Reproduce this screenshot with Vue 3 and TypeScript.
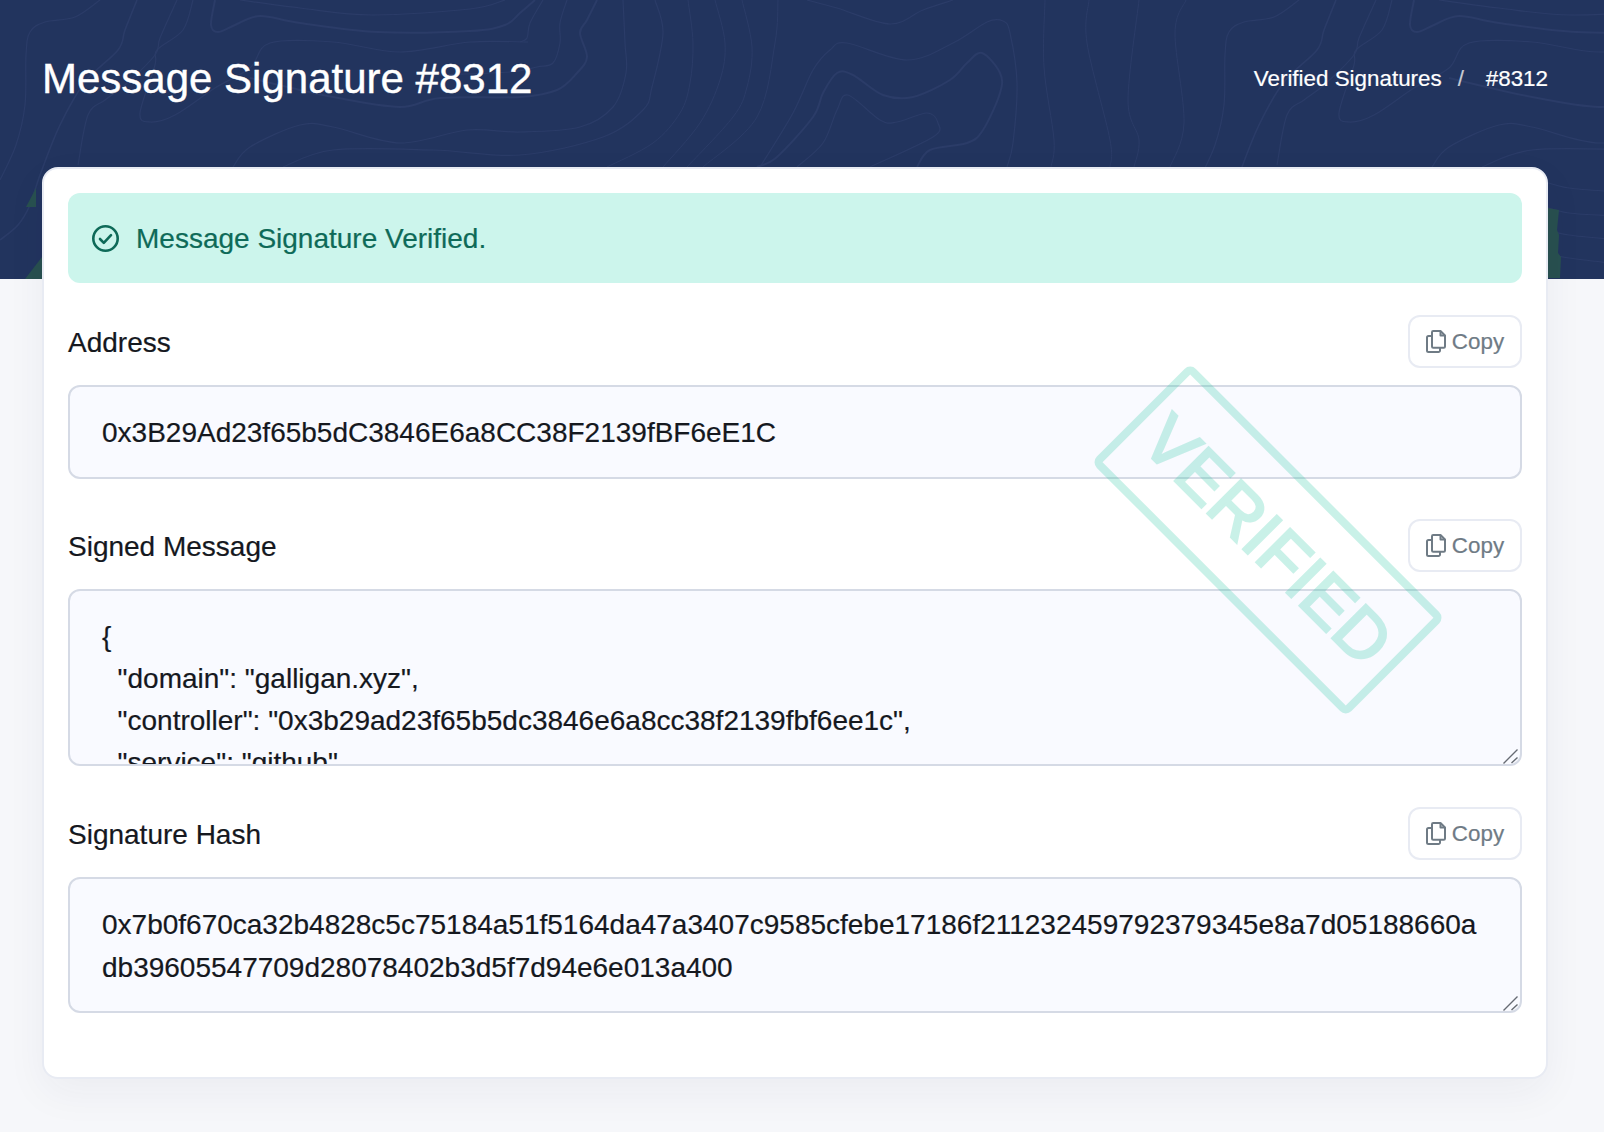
<script setup lang="ts">
type Pt = [number, number]
interface Contour { pts: Pt[]; w: number }

// Catmull-Rom through the traced points, so the contours stay smooth.
function smooth(pts: Pt[]): string {
  let d = `M${pts[0][0]} ${pts[0][1]}`
  for (let i = 0; i < pts.length - 1; i++) {
    const p0 = pts[Math.max(i - 1, 0)]
    const p1 = pts[i]
    const p2 = pts[i + 1]
    const p3 = pts[Math.min(i + 2, pts.length - 1)]
    const c1x = p1[0] + (p2[0] - p0[0]) / 6
    const c1y = p1[1] + (p2[1] - p0[1]) / 6
    const c2x = p2[0] - (p3[0] - p1[0]) / 6
    const c2y = p2[1] - (p3[1] - p1[1]) / 6
    d += ` C${c1x.toFixed(1)} ${c1y.toFixed(1)} ${c2x.toFixed(1)} ${c2y.toFixed(1)} ${p2[0]} ${p2[1]}`
  }
  return d
}

const contours: Contour[] = [
  { w: 1.2, pts: [[100, 0], [75, 17], [45, 22], [30, 32], [26, 55], [25, 105], [16, 145], [0, 180]] },
  { w: 1.6, pts: [[137, 0], [125, 30], [118, 50], [85, 82], [60, 125], [40, 175], [30, 205], [18, 225], [0, 240]] },
  { w: 1.2, pts: [[177, 0], [160, 38], [155, 55], [125, 85], [105, 100], [88, 115], [78, 165]] },
  { w: 1.2, pts: [[193, 0], [183, 30], [157, 50], [155, 65], [140, 113], [150, 122], [175, 115], [215, 88], [250, 68], [270, 43], [333, 42], [400, 52], [470, 42], [528, 42]] },
  { w: 2, pts: [[215, 0], [211, 25], [218, 32], [235, 25], [260, 16], [300, 23], [378, 32], [470, 31], [505, 25], [520, 13], [535, 0]] },
  { w: 1.2, pts: [[240, 0], [300, 8], [372, 15], [470, 9], [505, 0]] },
  { w: 1.2, pts: [[543, 0], [530, 23], [527, 38], [520, 42]] },
  { w: 1.2, pts: [[567, 0], [560, 23], [560, 43], [553, 63], [537, 67], [510, 72], [440, 75]] },
  { w: 2, pts: [[597, 0], [587, 20], [580, 33], [587, 57], [577, 73], [557, 90], [520, 97], [440, 98], [400, 107], [333, 97], [250, 78]] },
  { w: 1.2, pts: [[623, 0], [625, 43], [626, 73], [613, 107], [580, 127], [520, 132], [467, 130], [400, 143], [333, 127], [300, 125], [250, 147], [233, 167]] },
  { w: 1.2, pts: [[655, 0], [663, 33], [652, 87], [643, 110], [603, 137], [520, 155], [433, 150], [333, 150], [283, 167]] },
  { w: 1, pts: [[688, 0], [693, 43], [690, 83], [680, 113], [653, 143], [607, 167]] },
  { w: 1, pts: [[715, 0], [725, 43], [720, 80], [700, 123], [663, 167]] },
  { w: 1, pts: [[742, 0], [752, 47], [747, 87], [733, 117], [687, 167]] },
  { w: 1, pts: [[778, 0], [775, 43], [757, 117], [703, 167]] },
  { w: 1.2, pts: [[807, 0], [837, 8], [890, 24], [923, 10], [953, 0]] },
  { w: 1.2, pts: [[1007, 167], [1013, 143], [1017, 83], [1010, 33], [1003, 21], [987, 22], [953, 43], [907, 60], [847, 43], [830, 50], [813, 70], [793, 113], [760, 167]] },
  { w: 2, pts: [[917, 167], [930, 150], [967, 143], [983, 130], [1000, 93], [1000, 73], [982, 53], [967, 63], [950, 80], [913, 97], [883, 95], [853, 75], [837, 73], [823, 93], [813, 117], [777, 157], [757, 167]] },
  { w: 1.2, pts: [[797, 167], [823, 143], [837, 110], [848, 95], [880, 120], [897, 122], [927, 113], [938, 123], [933, 137], [870, 167]] },
  { w: 1, pts: [[1045, 0], [1044, 67], [1054, 140], [1051, 167]] },
  { w: 1, pts: [[1089, 0], [1087, 43], [1110, 140], [1110, 167]] },
  { w: 1, pts: [[1139, 0], [1128, 100], [1139, 140], [1134, 167]] },
  { w: 1, pts: [[1186, 0], [1175, 33], [1184, 123], [1170, 167]] },
  { w: 1.2, pts: [[340, 180], [370, 188], [420, 192]] },
  { w: 1.2, pts: [[340, 205], [370, 213], [420, 216]] },
  { w: 1.2, pts: [[340, 228], [370, 235], [420, 240]] },
  { w: 1.2, pts: [[340, 252], [370, 258], [420, 264]] },
]

const contourLines = contours.map((c) => ({ d: smooth(c.pts), w: c.w }))
const tileOffsets = [0, 1199]

const message = `{
  "domain": "galligan.xyz",
  "controller": "0x3b29ad23f65b5dc3846e6a8cc38f2139fbf6ee1c",
  "service": "github",
  "identifier": "galligan"
}`
const address = '0x3B29Ad23f65b5dC3846E6a8CC38F2139fBF6eE1C'
const hash =
  '0x7b0f670ca32b4828c5c75184a51f5164da47a3407c9585cfebe17186f211232459792379345e8a7d05188660adb39605547709d28078402b3d5f7d94e6e013a400'
</script>

<template>
  <div class="page">
    <header class="hero">
      <svg class="topo" width="1604" height="279" viewBox="0 0 1604 279" aria-hidden="true">
        <g v-for="x in tileOffsets" :key="x" :transform="`translate(${x} 0)`">
          <path v-for="(l, i) in contourLines" :key="i" :d="l.d" :stroke-width="l.w" class="contour" />
        </g>
        <polygon class="speck" points="26,207 36,188 36,207" />
        <polygon class="speck" points="25,279 42,257 42,279" />
        <polygon class="speck" points="1548,208 1559,210 1557,230 1559,235 1558,253 1561,257 1560,278 1548,278" />
      </svg>
      <h1 class="title">Message Signature #8312</h1>
      <nav class="crumbs">
        <span>Verified Signatures</span>
        <span class="sep">/</span>
        <span>#8312</span>
      </nav>
    </header>

    <main class="card">
      <div class="alert">
        <svg class="check" width="27" height="27" viewBox="0 0 27 27" fill="none" aria-hidden="true">
          <circle cx="13.5" cy="13.5" r="12.2" />
          <path d="M8 14l3.8 3.8 7.2-7.6" />
        </svg>
        <span class="alert-text">Message Signature Verified.</span>
      </div>

      <section class="field field-address">
        <div class="field-head">
          <label class="label">Address</label>
          <button class="copy" type="button">
            <svg class="copy-icon" width="20" height="23" viewBox="0 0 20 23" fill="none" aria-hidden="true">
              <path d="M6 2.2a1.2 1.2 0 0 1 1.2-1.2h7.3L19 5.5v11a1.2 1.2 0 0 1-1.2 1.2H7.2A1.2 1.2 0 0 1 6 16.500z" />
              <path d="M14.500 1v4.500H19" />
              <path d="M6 6H2.500A1.500 1.500 0 0 0 1 7.500v13A1.500 1.500 0 0 0 2.500 22h10a1.500 1.500 0 0 0 1.500-1.500v-2.800" />
            </svg>
            Copy
          </button>
        </div>
        <input class="box address" type="text" readonly :value="address" />
      </section>

      <section class="field">
        <div class="field-head">
          <label class="label">Signed Message</label>
          <button class="copy" type="button">
            <svg class="copy-icon" width="20" height="23" viewBox="0 0 20 23" fill="none" aria-hidden="true">
              <path d="M6 2.2a1.2 1.2 0 0 1 1.2-1.2h7.3L19 5.5v11a1.2 1.2 0 0 1-1.2 1.2H7.2A1.2 1.2 0 0 1 6 16.500z" />
              <path d="M14.500 1v4.500H19" />
              <path d="M6 6H2.500A1.500 1.500 0 0 0 1 7.500v13A1.500 1.500 0 0 0 2.500 22h10a1.500 1.500 0 0 0 1.500-1.500v-2.800" />
            </svg>
            Copy
          </button>
        </div>
        <div class="area-wrap">
          <textarea class="box area message" readonly :value="message"></textarea>
          <svg class="grip" width="16" height="16" viewBox="0 0 16 16" aria-hidden="true">
            <path d="M.5 14.500 14.500.5M8.500 14 14.500 8.500" />
          </svg>
        </div>
      </section>

      <section class="field">
        <div class="field-head">
          <label class="label">Signature Hash</label>
          <button class="copy" type="button">
            <svg class="copy-icon" width="20" height="23" viewBox="0 0 20 23" fill="none" aria-hidden="true">
              <path d="M6 2.2a1.2 1.2 0 0 1 1.2-1.2h7.3L19 5.5v11a1.2 1.2 0 0 1-1.2 1.2H7.2A1.2 1.2 0 0 1 6 16.500z" />
              <path d="M14.500 1v4.500H19" />
              <path d="M6 6H2.500A1.500 1.500 0 0 0 1 7.500v13A1.500 1.500 0 0 0 2.500 22h10a1.500 1.500 0 0 0 1.500-1.500v-2.800" />
            </svg>
            Copy
          </button>
        </div>
        <div class="area-wrap">
          <textarea class="box area hash" readonly :value="hash"></textarea>
          <svg class="grip" width="16" height="16" viewBox="0 0 16 16" aria-hidden="true">
            <path d="M.5 14.500 14.500.5M8.500 14 14.500 8.500" />
          </svg>
        </div>
      </section>

      <div class="stamp" aria-hidden="true">VERIFIED</div>
    </main>
  </div>
</template>

<style>
html,
body {
  margin: 0;
  background: #f6f7fa;
}
</style>

<style scoped>
* {
  box-sizing: border-box;
}
.page {
  height: 1132px;
  overflow: hidden;
  background: #f6f7fa;
  font-family: "Liberation Sans", Arial, sans-serif;
  color: #15181e;
  -webkit-text-stroke: 0.2px currentColor;
}
.hero {
  position: relative;
  height: 279px;
  padding: 54px 56px 0 42px;
  display: flex;
  justify-content: space-between;
  align-items: flex-start;
  background: #22345e;
  color: #fff;
}
.topo {
  position: absolute;
  inset: 0;
}
.contour {
  fill: none;
  stroke: #2b3c68;
}
.speck {
  fill: #28504f;
}
.title {
  position: relative;
  margin: 0;
  font-size: 42px;
  line-height: 50px;
  font-weight: 400;
  -webkit-text-stroke: 0.4px currentColor;
}
.crumbs {
  position: relative;
  display: flex;
  align-items: center;
  height: 50px;
  font-size: 22.4px;
}
.sep {
  width: 44px;
  padding-left: 16px;
  color: #c9ccd4;
}
.card {
  position: relative;
  margin: -112px 56px 0 42px;
  padding: 24px 24px 23px;
  border: 2px solid #e8ebf3;
  border-radius: 16px;
  background: #fff;
  box-shadow: 0 14px 40px rgba(30, 40, 80, 0.05);
}
.alert {
  display: flex;
  align-items: center;
  gap: 17px;
  height: 90px;
  padding: 0 24px;
  margin-bottom: 32px;
  border-radius: 12px;
  background: #ccf5ec;
  color: #0e6a58;
  font-size: 28px;
}
.alert-text {
  padding-top: 2px;
}
.check circle,
.check path {
  stroke: #0e6a58;
  stroke-width: 2.6;
  stroke-linecap: round;
  stroke-linejoin: round;
}
.field {
  margin-bottom: 41px;
}
.field-address {
  margin-bottom: 40px;
}
.field-head {
  display: flex;
  align-items: center;
  justify-content: space-between;
  margin-bottom: 17px;
}
.label {
  padding-top: 2px;
  font-size: 28px;
  line-height: 42px;
}
.copy {
  display: inline-flex;
  align-items: center;
  justify-content: center;
  gap: 6px;
  width: 114px;
  height: 53px;
  padding: 0;
  border: 2px solid #e8ebf3;
  border-radius: 12px;
  background: #fff;
  color: #6f7b85;
  font-family: inherit;
  font-size: 22.4px;
}
.copy-icon path {
  stroke: #6f7b85;
  stroke-width: 2;
  stroke-linejoin: round;
}
.box {
  display: block;
  width: 100%;
  margin: 0;
  padding: 24px 32px 23px;
  border: 2px solid #d5dae5;
  border-radius: 12px;
  background: #f9faff;
  color: #15181e;
  font-family: inherit;
  font-size: 28px;
  line-height: 42px;
  outline: none;
}
.address {
  height: 94px;
  padding-top: 25px;
}
.area-wrap {
  position: relative;
}
.area {
  overflow: hidden;
  resize: none;
}
.grip {
  position: absolute;
  right: 3px;
  bottom: 1px;
}
.grip path {
  fill: none;
  stroke: #666b73;
  stroke-width: 1.4;
}
.message {
  height: 177px;
  padding-top: 25px;
  white-space: pre-wrap;
}
.hash {
  height: 136px;
  padding-top: 23.5px;
  line-height: 43px;
  overflow-wrap: anywhere;
}
.stamp {
  position: absolute;
  left: 1043.5px;
  top: 300.5px;
  width: 360px;
  height: 140px;
  display: flex;
  align-items: center;
  justify-content: center;
  transform: rotate(45deg);
  border: 8px solid #2cc8a5;
  border-radius: 8px;
  color: #2cc8a5;
  font-size: 69px;
  -webkit-text-stroke: 2.5px #2cc8a5;
  opacity: 0.25;
  pointer-events: none;
}
</style>
